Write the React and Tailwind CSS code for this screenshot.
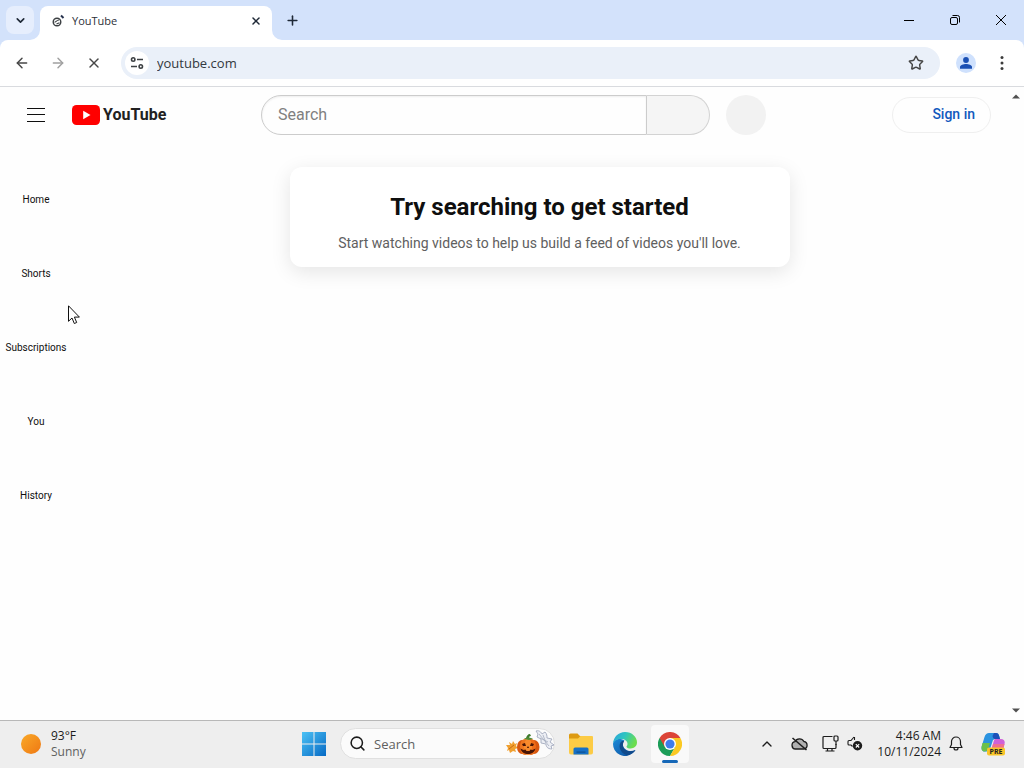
import {
  ArrowLeft,
  ArrowRight,
  ChevronDown,
  ChevronUp,
  Plus,
  Search,
  Star,
  X,
} from 'lucide-react';

const guideItems = ['Home', 'Shorts', 'Subscriptions', 'You', 'History'];

const GlobeIcon = () => (
  <svg viewBox="0 0 14 14" className="h-3.5 w-3.5" fill="none" stroke="#3c4043">
    <circle cx="5" cy="8" r="3.8" strokeWidth="1.4" />
    <path d="M2.500 8.200c1.500-.2 2-2 4.500-2.200M4.500 10l3-1.300" strokeWidth="1.1" />
    <path d="M9 1.500l2.500 2.500" stroke="#26324d" strokeWidth="2" />
  </svg>
);

const SiteSettingsIcon = () => (
  <svg viewBox="0 0 14 14" className="h-3.5 w-3.5" fill="none" stroke="#3c4043" strokeWidth="1.6">
    <circle cx="3.2" cy="3.5" r="1.7" />
    <path d="M7 3.500h6M1 10.500h6" />
    <circle cx="10.8" cy="10.5" r="1.7" />
  </svg>
);

const TabCurve = ({ side }) => (
  <svg
    viewBox="0 0 10 10"
    className={
      side === 'left'
        ? 'absolute -left-2.5 bottom-0 h-2.5 w-2.5'
        : 'absolute -right-2.5 bottom-0 h-2.5 w-2.5'
    }
  >
    <path fill="#fff" d={side === 'left' ? 'M10 0v10H0A10 10 0 0 0 10 0z' : 'M0 0v10h10A10 10 0 0 1 0 0z'} />
  </svg>
);

const TitleBar = () => (
  <header className="flex h-10 shrink-0 items-center bg-[#d3e2fb] pl-1.5 text-[#1f2937]">
    <button
      aria-label="Search tabs"
      className="flex h-7 w-7 items-center justify-center rounded-lg bg-[#e6eefd]"
    >
      <ChevronDown size={13} strokeWidth={3} />
    </button>
    <div className="relative ml-1.5 mt-1.5 flex h-[34px] w-[232px] items-center rounded-t-lg bg-white pb-1 pl-3 pr-2.5">
      <TabCurve side="left" />
      <GlobeIcon />
      <span className="ml-1.5 flex-1 text-[11px] leading-4 text-[#2c3038]">YouTube</span>
      <button aria-label="Close tab" className="flex h-4 w-3 items-center justify-center">
        <X size={12} strokeWidth={3} className="shrink-0" />
      </button>
      <TabCurve side="right" />
    </div>
    <button aria-label="New tab" className="ml-3 flex h-4 w-4 items-center justify-center">
      <Plus size={15} strokeWidth={2.5} className="shrink-0" />
    </button>
    <div className="ml-auto flex text-black">
      <button aria-label="Minimize" className="flex h-10 w-[46px] items-center justify-center">
        <svg viewBox="0 0 10 10" className="h-2.5 w-2.5" stroke="currentColor">
          <path d="M0 5.500h10" />
        </svg>
      </button>
      <button aria-label="Restore" className="flex h-10 w-[46px] items-center justify-center">
        <svg viewBox="0 0 12 12" className="h-3 w-3" fill="none" stroke="currentColor">
          <rect x="1.5" y="3.5" width="7" height="7" rx="1.5" />
          <path d="M3.500 1.500h5a2 2 0 0 1 2 2v5" />
        </svg>
      </button>
      <button aria-label="Close" className="flex h-10 w-[46px] items-center justify-center">
        <svg viewBox="0 0 12 12" className="h-3 w-3" stroke="currentColor">
          <path d="M1 1l10 10M11 1L1 11" />
        </svg>
      </button>
    </div>
  </header>
);

const Toolbar = () => (
  <div className="shrink-0 bg-[#d3e2fb]">
    <nav className="flex h-[47px] items-center rounded-t-lg border-b border-[#d9dbdf] bg-white px-3.5 text-[#474747]">
      <button aria-label="Back">
        <ArrowLeft size={16} strokeWidth={2.2} />
      </button>
      <button aria-label="Forward" className="ml-5 text-[#a0a0a0]">
        <ArrowRight size={16} strokeWidth={2.2} />
      </button>
      <button aria-label="Stop" className="ml-5">
        <X size={16} strokeWidth={2.2} />
      </button>
      <div className="ml-[19px] flex h-8 flex-1 items-center rounded-full bg-[#eaf0f9] pl-1 pr-4">
        <button
          aria-label="Site information"
          className="flex h-6 w-6 items-center justify-center rounded-full bg-white"
        >
          <SiteSettingsIcon />
        </button>
        <input
          aria-label="Address"
          defaultValue="youtube.com"
          className="ml-2 min-w-0 flex-1 bg-transparent text-[13px] leading-5 text-[#333840] outline-none"
        />
        <button aria-label="Bookmark">
          <Star size={16} strokeWidth={2.2} />
        </button>
      </div>
      <button
        aria-label="Profile"
        className="ml-4 flex h-5 w-5 items-center justify-center rounded-full bg-[#cfe1fd]"
      >
        <svg viewBox="0 0 12 12" className="h-3 w-3" fill="#1b50b4">
          <circle cx="6" cy="3" r="2.9" />
          <path d="M0 11.700V10c0-2 3.500-3 6-3s6 1 6 3v1.700z" />
        </svg>
      </button>
      <button aria-label="Menu" className="ml-[18px] flex w-4 justify-center">
        <svg viewBox="0 0 4 16" className="h-4 w-1" fill="#3c3c3c">
          <circle cx="2" cy="2.5" r="1.5" />
          <circle cx="2" cy="8" r="1.5" />
          <circle cx="2" cy="13.5" r="1.5" />
        </svg>
      </button>
    </nav>
  </div>
);

const Masthead = () => (
  <header className="flex h-14 items-center px-4">
    <div className="flex flex-1 items-center">
      <button aria-label="Guide" className="flex h-10 w-10 items-center justify-center">
        <svg viewBox="0 0 18 14" className="h-3.5 w-[18px]" stroke="#0f0f0f">
          <path d="M0 .5h18M0 6.500h18M0 13.500h18" />
        </svg>
      </button>
      <a href="#home" aria-label="YouTube Home" className="ml-4 flex items-center gap-[3px]">
        <svg viewBox="0 0 28 20" className="h-5 w-7">
          <rect width="28" height="20" rx="4.5" fill="#f00" />
          <path d="M11.200 5.700v8.600L18.500 10z" fill="#fff" />
        </svg>
        <span className="text-base font-bold leading-5 text-[#212121]">YouTube</span>
      </a>
    </div>
    <form className="flex w-[525px] items-center pl-5" onSubmit={(e) => e.preventDefault()}>
      <input
        aria-label="Search"
        placeholder="Search"
        className="h-10 min-w-0 flex-1 rounded-l-full border border-[#ccc] pb-0.5 pl-4 text-base shadow-[inset_0_1px_2px_#eee] outline-none placeholder:text-[#808080]"
      />
      <button
        aria-label="Submit search"
        className="h-10 w-[63px] rounded-r-full border border-l-0 border-[#d3d3d3] bg-[#f5f5f5]"
      />
      <button type="button" aria-label="Search with your voice" className="ml-4 h-10 w-10 rounded-full bg-[#f2f2f2]" />
    </form>
    <div className="flex flex-1 justify-end">
      <a
        href="#signin"
        className="flex h-9 w-[99px] items-center justify-end rounded-full border border-[#efefef] pb-0.5 pr-[15px] text-sm font-medium text-[#1259bd]"
      >
        Sign in
      </a>
    </div>
  </header>
);

const GuideEntry = ({ label }) => (
  <a
    href={`#${label.toLowerCase()}`}
    className="flex h-[74px] flex-col items-center justify-end pb-3.5 text-[10px] leading-[14px] text-[#0f0f0f]"
  >
    {label}
  </a>
);

const Page = () => (
  <div className="flex min-h-0 flex-1 bg-[#fefefe] font-['Roboto',sans-serif]">
    <div className="min-w-0 flex-1">
      <Masthead />
      <div className="flex">
        <nav className="w-[72px] pt-1">
          {guideItems.map((label) => (
            <GuideEntry key={label} label={label} />
          ))}
        </nav>
        <main className="flex flex-1 items-start justify-center pt-6">
          <section className="w-full max-w-[500px] rounded-xl bg-white px-6 pb-3.5 pt-6 text-center shadow-[0_5px_20px_rgba(0,0,0,0.1)]">
            <h1 className="text-2xl font-bold leading-8 text-[#0f0f0f]">Try searching to get started</h1>
            <p className="mt-2.5 text-sm leading-5 text-[#606060]">
              Start watching videos to help us build a feed of videos you&apos;ll love.
            </p>
          </section>
        </main>
      </div>
    </div>
    <div className="flex w-[17px] flex-col items-center justify-between py-[7px]">
      <svg viewBox="0 0 8 5" className="h-[5px] w-2" fill="#505050">
        <path d="M0 4.500l4-4 4 4z" />
      </svg>
      <svg viewBox="0 0 8 5" className="h-[5px] w-2" fill="#505050">
        <path d="M0 .5l4 4 4-4z" />
      </svg>
    </div>
  </div>
);

const WindowsLogo = () => (
  <svg viewBox="0 0 24 24" className="h-6 w-6">
    <defs>
      <linearGradient id="win" x1="0" y1="0" x2="1" y2="1">
        <stop offset="0" stopColor="#4cc2f5" />
        <stop offset="1" stopColor="#0669c4" />
      </linearGradient>
    </defs>
    <path fill="url(#win)" d="M0 0h11.500v11.500H0zM12.500 0H24v11.500H12.500zM0 12.500h11.500V24H0zM12.500 12.500H24V24H12.500z" />
  </svg>
);

const PumpkinArt = () => (
  <svg viewBox="0 0 52 28" className="h-7 w-[52px]">
    {/* maple leaf */}
    <path
      d="M4 15l4 0-1-3 3 2 1-3 2 3 2-1-1 3 2 2-3 1 1 3-3-1-3 2-1-3-2 1 1-3z"
      fill="#f0a030"
    />
    <path d="M7 19l5-4" stroke="#c96a12" />
    {/* pumpkin */}
    <g transform="translate(3 0)">
      <ellipse cx="17" cy="17" rx="5" ry="7" fill="#d8570f" />
      <ellipse cx="29" cy="17" rx="5.5" ry="7" fill="#d8570f" />
      <ellipse cx="20" cy="17" rx="5" ry="8" fill="#f0761f" />
      <ellipse cx="26" cy="17" rx="5" ry="8" fill="#ee6c18" />
      <ellipse cx="23" cy="17" rx="4" ry="8" fill="#f98a2c" />
      <path d="M21 9c0-3 2-5 4-5l1 2c-2 0-2 1-2 3z" fill="#3d7a2c" />
      <path d="M19 9c2-2 6-2 9 0l-4 1z" fill="#4f8b35" />
      <path d="M17 14l3-1 1 3h-3zM25 16l1-3 3 1-1 2zM22.500 16.500l1 0 .5 1.500h-2z" fill="#4a1606" />
      <path
        d="M15.500 18.500l3 1.500 2-.5 1 1.500 3 0 1-1.500 2 .5 3-1.500c-1 4-4 5.500-7.500 5.500s-6.500-1.500-7.500-5.500z"
        fill="#4a1606"
      />
    </g>
    {/* bat wing */}
    <path
      d="M34 1c3-1 5 1 6 3l3-2c2 2 2 4 2 6l5 1-2 3 4 3-3 1 1 3c-5 0-6-3-6-5l-5-1 0-4-4-2 1-3z"
      fill="#eceef4"
      stroke="#9aa2b8"
      strokeWidth=".8"
    />
    <path d="M37 4l10 12M41 5l3 8M38 8l8 4" stroke="#a6adbf" strokeWidth=".8" fill="none" />
  </svg>
);

const FolderIcon = () => (
  <svg viewBox="0 0 24 24" className="h-6 w-6">
    <path d="M0 3a1.500 1.500 0 0 1 1.500-1.500h7L11 4h12v6H0z" fill="#dd9a12" />
    <path d="M0 6.500h9L11.500 4H23a1 1 0 0 1 1 1v15.500a2 2 0 0 1-2 2H2a2 2 0 0 1-2-2z" fill="#fccb45" />
    <path d="M4.500 22.500V17a1.500 1.500 0 0 1 1.500-1.500h12a1.500 1.500 0 0 1 1.500 1.500v5.500z" fill="#1670c6" />
    <path d="M7.500 19.500h9v1.200h-9z" fill="#0c4f93" />
  </svg>
);

const EdgeIcon = () => (
  <svg viewBox="0 0 24 24" className="h-6 w-6">
    <defs>
      <linearGradient id="edgeTop" x1="0" y1="0" x2="1" y2=".4">
        <stop offset="0" stopColor="#2a9fe0" />
        <stop offset=".5" stopColor="#2fc5c0" />
        <stop offset="1" stopColor="#6bdd4e" />
      </linearGradient>
      <linearGradient id="edgeLow" x1="0" y1="0" x2="1" y2="1">
        <stop offset="0" stopColor="#1b8ad8" />
        <stop offset="1" stopColor="#0c4d9c" />
      </linearGradient>
    </defs>
    <path d="M0 12a12 12 0 0 0 19.500 9.300c1.200-.9 2.300-2 3-3.300-5 2.500-11.500.5-12.500-4.500-.5-2.500.8-4.500 1.500-5C5 5 .5 8 0 12z" fill="url(#edgeLow)" />
    <path d="M0 11.500C.5 5 5.500 0 12 0c7 0 12 5 12 10.300 0 4-3 6.200-6.200 6.200-2.800 0-4.300-1-4.300-1.800 0-.6 1-.9 1-2.900 0-2.700-2.800-4.800-6.300-4.800C4.300 7 1 8.800 0 11.500z" fill="url(#edgeTop)" />
    <path d="M8.500 9.500c-3.500 3-2.500 11 5.500 13.800 3.500-.3 6.800-2.500 8.500-5.300-5 2.500-12 1-12.600-4.600-.1-1.500.4-3 1.100-4.200-.8-.3-1.800-.1-2.500.3z" fill="#114a8b" />
  </svg>
);

const ChromeIcon = () => (
  <svg viewBox="0 0 24 24" className="h-6 w-6">
    <path d="M12 12L1.600 6A12 12 0 0 0 12 24l5.200-9z" fill="#1c9d58" />
    <path d="M12 6h10.400A12 12 0 0 1 12 24l5.200-9z" fill="#fbc922" />
    <path d="M1.600 6l5.200 9L12 6h10.400A12 12 0 0 0 1.600 6z" fill="#dc4437" />
    <circle cx="12" cy="12" r="6" fill="#fff" />
    <circle cx="12" cy="12" r="4.6" fill="#3e7cec" />
  </svg>
);

const CloudOffIcon = () => (
  <svg viewBox="0 0 17 14" className="h-3.5 w-[17px]" fill="#b0b0b0" stroke="#1c1c1c" strokeWidth="1.3">
    <path d="M4.500 12a3.700 3.700 0 0 1-.6-7.300 5 5 0 0 1 9-.2 3.800 3.800 0 0 1 0 7.500z" />
    <path d="M1.500 1l14 12" strokeWidth="1.6" />
  </svg>
);

const NetworkIcon = () => (
  <svg viewBox="0 0 17 17" className="h-[17px] w-[17px]" fill="none" stroke="#1c1c1c" strokeWidth="1.2">
    <path d="M10.500 1.500H2a1 1 0 0 0-1 1v10a1 1 0 0 0 1 1h11a1 1 0 0 0 1-1V9M5.500 13.500v2.500M10 13.500v2.500M3.500 16h9" />
    <rect x="12" y="1" width="4" height="5" rx="1" />
    <path d="M14 6v4" />
  </svg>
);

const MutedIcon = () => (
  <svg viewBox="0 0 16 15" className="h-[15px] w-4" fill="none" stroke="#1c1c1c" strokeWidth="1.1">
    <path d="M7.500 1v3M7 1L4 4.500H2a1 1 0 0 0-1 1V8a1 1 0 0 0 1 1h2l1.500 1.500" />
    <circle cx="10.5" cy="9.8" r="4.7" fill="#1c1c1c" stroke="none" />
    <path d="M8.800 8.100l3.400 3.400M12.200 8.100l-3.400 3.400" stroke="#fff" />
  </svg>
);

const BellIcon = () => (
  <svg viewBox="0 0 14 15" className="h-[15px] w-3.5" fill="none" stroke="#1c1c1c" strokeWidth="1.2">
    <path d="M1 11.500l1.500-3V5.500a4.500 4.500 0 0 1 9 0v3l1.500 3zM5 12a2 2 0 0 0 4 0" strokeLinejoin="round" />
  </svg>
);

const CopilotIcon = () => (
  <svg viewBox="0 0 24 24" className="h-6 w-6">
    <path d="M8 1h7c2 0 2.600 1 3.200 3l.8 3h-5l-2 1-3 9c-.6 2-2 2.500-4 2.500H3.500C1 19.500 0 17 .8 14L3.500 5C4.300 2.300 6 1 8 1z" fill="#2b93e0" />
    <path d="M1.500 11l7.500 0-1.500 5c-.6 2-2 3.500-4 3.500C1 19.500 0 17 .8 14z" fill="#6bc04b" />
    <path d="M13 1h2c2 0 2.600 1 3.200 3l.8 3h-5c-1.500 0-2-1-2.500-3z" fill="#1c50b8" />
    <path d="M14.500 7H20c3 0 4.300 2 3.500 5l-2 7H10l2.500-9c.5-2 1-3 2-3z" fill="#cf62d8" />
    <path d="M12 12h11.500l-1 4H11z" fill="#f0708f" />
    <rect x="6" y="15.5" width="18" height="8" rx="2" fill="#f9c528" />
    <text x="15" y="22" textAnchor="middle" fontFamily="Noto Sans" fontSize="7" fontWeight="700" fill="#222">
      PRE
    </text>
  </svg>
);

const Taskbar = () => (
  <footer className="flex h-12 shrink-0 items-center border-t border-[#b8b8b8] bg-[#eee] pb-0.5 text-xs leading-4 text-[#1c1c1c]">
    <button className="flex items-center gap-2.5 pl-[21px] text-left">
      <span className="h-5 w-5 rounded-full bg-linear-to-br from-[#f9a928] to-[#ee7712]" />
      <span>
        <span className="block">93°F</span>
        <span className="block text-[#606060]">Sunny</span>
      </span>
    </button>
    <div className="ml-auto flex shrink-0 items-center">
      <button aria-label="Start">
        <WindowsLogo />
      </button>
      <label className="ml-3.5 flex h-[31px] w-[215px] items-center rounded-full border border-[#e0e0e0] bg-[#fbfbfb] pl-2">
        <Search size={17} strokeWidth={2.2} className="shrink-0" />
        <input
          aria-label="Search Windows"
          placeholder="Search"
          className="ml-2 min-w-0 flex-1 bg-transparent text-[13px] outline-none placeholder:text-[#606060]"
        />
        <PumpkinArt />
      </label>
      <button aria-label="File Explorer" className="ml-3.5">
        <FolderIcon />
      </button>
      <button aria-label="Edge" className="ml-5">
        <EdgeIcon />
      </button>
      <button
        aria-label="Chrome"
        className="relative ml-3.5 flex h-[38px] w-[38px] items-center justify-center rounded bg-[#f9f9f9]"
      >
        <ChromeIcon />
        <span className="absolute bottom-0 h-[3px] w-4 rounded-full bg-[#1668b8]" />
      </button>
    </div>
    <div className="flex w-[335px] shrink-0 items-center justify-end pr-[19px]">
      <button aria-label="Hidden icons">
        <ChevronUp size={16} strokeWidth={2} />
      </button>
      <button aria-label="OneDrive" className="ml-4">
        <CloudOffIcon />
      </button>
      <button aria-label="Network" className="ml-3.5">
        <NetworkIcon />
      </button>
      <button aria-label="Volume" className="ml-2">
        <MutedIcon />
      </button>
      <button className="ml-3.5 text-right">
        <span className="block">4:46 AM</span>
        <span className="block">10/11/2024</span>
      </button>
      <button aria-label="Notifications" className="ml-2">
        <BellIcon />
      </button>
      <button aria-label="Copilot" className="ml-[18px]">
        <CopilotIcon />
      </button>
    </div>
  </footer>
);

const App = () => (
  <div className="relative flex h-screen flex-col overflow-hidden font-['Open_Sans','Noto_Sans',sans-serif]">
    <TitleBar />
    <Toolbar />
    <Page />
    <Taskbar />
    <svg viewBox="0 0 12 20" className="pointer-events-none absolute left-[68px] top-[305px] h-5 w-3">
      <path d="M.5.800v15.500l3.500-3.300 2.300 5.500 2.400-1-2.300-5.400h5z" fill="#fff" stroke="#111" />
    </svg>
  </div>
);

export default App;
